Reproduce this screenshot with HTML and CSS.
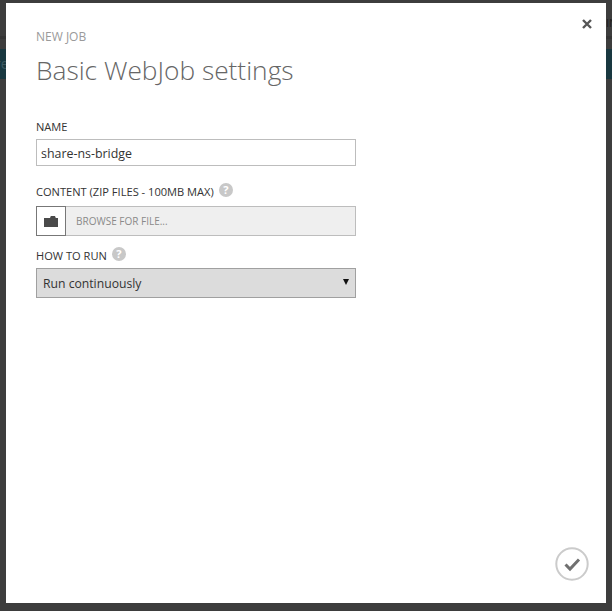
FILE: index.html
```html
<!DOCTYPE html>
<html lang="en">
  <head>
    <meta charset="UTF-8" />
    <title>New Job</title>
    <link rel="stylesheet" href="styles.css">
  </head>
  <body>
    <!-- Portal page dimmed behind the dialog -->
    <div class="backdrop">
      <span class="backdrop-corner">IN</span>
      <div class="backdrop-line"></div>
      <div class="backdrop-bar"><span class="backdrop-text">re</span></div>
    </div>

    <div class="dialog">
      <button class="close-btn" aria-label="Close">
        <svg width="10" height="10" viewBox="0 0 10 10">
          <path d="M1 1 L9 9 M9 1 L1 9" stroke="#555" stroke-width="2.4" fill="none" />
        </svg>
      </button>

      <div class="eyebrow">NEW JOB</div>
      <h1 class="title">Basic WebJob settings</h1>

      <form class="job-form">
        <label class="field-label name-label">NAME</label>
        <input class="text-input" type="text" value="share-ns-bridge" />

        <label class="field-label content-label">
          CONTENT (ZIP FILES - 100MB MAX)
          <span class="help">?</span>
        </label>
        <div class="file-picker">
          <span class="file-btn">
            <svg width="14" height="11" viewBox="0 0 14 11">
              <path d="M0 2 H6 L6.8 0 H11 L11.8 2 H14 V11 H0 Z" fill="#4a4a4a" />
            </svg>
          </span>
          <span class="file-text">BROWSE FOR FILE...</span>
        </div>

        <label class="field-label run-label">
          HOW TO RUN
          <span class="help">?</span>
        </label>
        <div class="select-box">
          <span>Run continuously</span>
          <span class="select-arrow"></span>
        </div>
      </form>

      <button class="confirm-btn" aria-label="OK">
        <svg width="34" height="34" viewBox="0 0 34 34">
          <circle cx="17" cy="17" r="15.7" fill="none" stroke="#cbcbcb" stroke-width="2" />
          <path d="M10.5 17.5 L15 22 L24 12.5" fill="none" stroke="#707070" stroke-width="3" />
        </svg>
      </button>
    </div>
  </body>
</html>
```

FILE: styles.css
```css
html,
body {
  height: 100%;
}
body {
  margin: 0;
  padding: 3px 6px 8px;
  box-sizing: border-box;
  background: #3d3d3d;
  font-family: "Open Sans", "Noto Sans", sans-serif;
  overflow: hidden;
}
.backdrop {
  position: absolute;
  top: 0;
  left: 0;
  width: 100%;
}
.backdrop-corner {
  position: absolute;
  top: 16px;
  left: 606px;
  font-size: 11px;
  line-height: 14px;
  color: #1c1c1c;
}
.backdrop-line {
  height: 3px;
  margin-top: 36px;
  background: #353535;
}
.backdrop-bar {
  height: 30px;
  margin-top: 10px;
  background: #193840;
  color: #3c5a62;
  font-size: 14px;
  line-height: 30px;
}
.backdrop-text {
  margin-left: -5px;
}
.dialog {
  position: relative;
  width: 600px;
  height: 600px;
  background: #fff;
  padding: 28px 30px 0;
  box-sizing: border-box;
}
.close-btn {
  position: absolute;
  top: 16px;
  right: 14px;
  width: 10px;
  height: 10px;
  padding: 0;
  border: none;
  background: none;
  display: flex;
}
.eyebrow {
  font-size: 12px;
  font-weight: 400;
  line-height: 12px;
  color: #9a9a9a;
}
.title {
  margin: 9px 0 0;
  font-size: 26.3px;
  font-weight: 300;
  line-height: 36px;
  color: #666;
}
.job-form {
  display: flex;
  flex-direction: column;
  align-items: flex-start;
  width: 320px;
}
.field-label {
  display: flex;
  align-items: center;
  font-size: 11.1px;
  line-height: 14px;
  color: #333;
}
.name-label {
  margin-top: 32px;
}
.content-label {
  margin-top: 19px;
}
.run-label {
  margin-top: 13px;
}
.help {
  width: 14px;
  height: 14px;
  margin: -4px 0 0 5px;
  border-radius: 50%;
  background: #c8c8c8;
  color: #fff;
  font-size: 11px;
  font-weight: 700;
  line-height: 14px;
  text-align: center;
}
.text-input {
  width: 100%;
  height: 27px;
  margin-top: 5px;
  padding: 1px 4px 0;
  box-sizing: border-box;
  border: 1px solid #bdbdbd;
  font-family: inherit;
  font-size: 12.4px;
  color: #333;
  outline: none;
}
.file-picker {
  display: flex;
  width: 100%;
  height: 30px;
  margin-top: 7px;
  box-sizing: border-box;
  border: 1px solid #bdbdbd;
  background: #efefef;
}
.file-btn {
  display: flex;
  align-items: center;
  justify-content: center;
  width: 30px;
  margin: -1px 0 -1px -1px;
  box-sizing: border-box;
  border: 1px solid #777;
  background: #fff;
}
.file-text {
  margin-left: 10px;
  font-size: 10px;
  line-height: 28px;
  color: #8a8a8a;
}
.select-box {
  display: flex;
  align-items: center;
  justify-content: space-between;
  width: 100%;
  height: 30px;
  margin-top: 5px;
  padding: 1px 6px 0;
  box-sizing: border-box;
  border: 1px solid #a0a0a0;
  background: #dcdcdc;
  font-size: 12.2px;
  color: #333;
}
.select-arrow {
  width: 0;
  height: 0;
  margin-top: -3px;
  border-left: 3px solid transparent;
  border-right: 3px solid transparent;
  border-top: 6px solid #111;
}
.confirm-btn {
  position: absolute;
  right: 17px;
  bottom: 22px;
  padding: 0;
  border: none;
  background: none;
  display: flex;
}
```
